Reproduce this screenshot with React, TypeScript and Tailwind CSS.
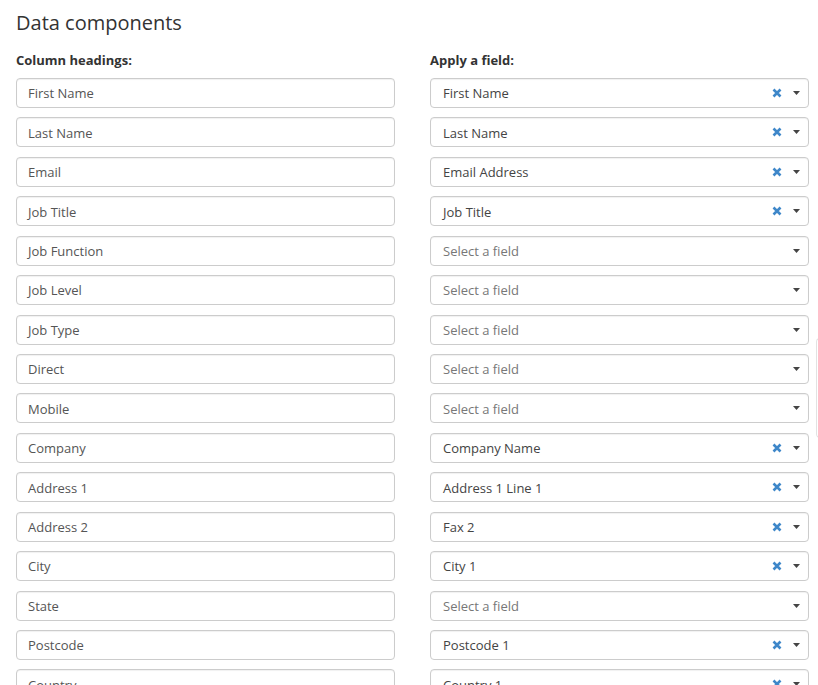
import { ReactNode } from "react"

const rows: { heading: string; field: string | null }[] = [
    { heading: "First Name", field: "First Name" },
    { heading: "Last Name", field: "Last Name" },
    { heading: "Email", field: "Email Address" },
    { heading: "Job Title", field: "Job Title" },
    { heading: "Job Function", field: null },
    { heading: "Job Level", field: null },
    { heading: "Job Type", field: null },
    { heading: "Direct", field: null },
    { heading: "Mobile", field: null },
    { heading: "Company", field: "Company Name" },
    { heading: "Address 1", field: "Address 1 Line 1" },
    { heading: "Address 2", field: "Fax 2" },
    { heading: "City", field: "City 1" },
    { heading: "State", field: null },
    { heading: "Postcode", field: "Postcode 1" },
    { heading: "Country", field: "Country 1" },
]

function Box({ children }: { children: ReactNode }) {
    return (
        <div className="h-[30px] flex items-center border border-[#cccccc] rounded-[4px] bg-white text-[13px] text-[#555555] shadow-[inset_0_1px_1px_rgba(0,0,0,0.06)]">
            {children}
        </div>
    )
}

function ClearIcon() {
    return (
        <svg width="10" height="10" viewBox="0 0 10 10" className="block">
            <path d="M1.5 1.5 L8.5 8.5 M8.5 1.5 L1.5 8.5" stroke="#3e87c9" strokeWidth="2.6" strokeLinecap="butt" />
        </svg>
    )
}

function Caret() {
    return (
        <svg width="7" height="4" viewBox="0 0 7 4" className="block">
            <path d="M0 0 H7 L3.5 4 Z" fill="#444444" />
        </svg>
    )
}

function FieldSelect({ value }: { value: string | null }) {
    return (
        <Box>
            <span className={`flex-1 pl-[12px] pt-[2px] truncate ${value ? "text-[#444444]" : "text-[#777777]"}`}>
                {value ?? "Select a field"}
            </span>
            {value && <span className="mr-[11px]"><ClearIcon /></span>}
            <span className="mr-[8px]"><Caret /></span>
        </Box>
    )
}

export default function App() {
    return (
        <div className="relative h-[685px] overflow-hidden bg-white font-['Open_Sans',sans-serif] text-[#333333]">
            <div className="pl-4 w-[809px]">
                <h3 className="mt-[10px] text-[20px] leading-[26px] font-normal">Data components</h3>
                <div className="mt-[15px] grid grid-cols-2 gap-x-[35px]">
                    <div className="flex flex-col gap-[9.43px]">
                        <div className="text-[13px] font-bold leading-[18px] mb-[-0.4px]">Column headings:</div>
                        {rows.map(r => (
                            <Box key={r.heading}>
                                <span className="pl-[11px] pt-[2px]">{r.heading}</span>
                            </Box>
                        ))}
                    </div>
                    <div className="flex flex-col gap-[9.43px]">
                        <div className="text-[13px] font-bold leading-[18px] mb-[-0.4px]">Apply a field:</div>
                        {rows.map(r => (
                            <FieldSelect key={r.heading} value={r.field} />
                        ))}
                    </div>
                </div>
            </div>
            <div className="absolute left-[816px] top-[338px] w-[4px] h-[100px] border-l border-t border-b border-[#e2e2e2] rounded-l-[4px]" />
        </div>
    )
}
